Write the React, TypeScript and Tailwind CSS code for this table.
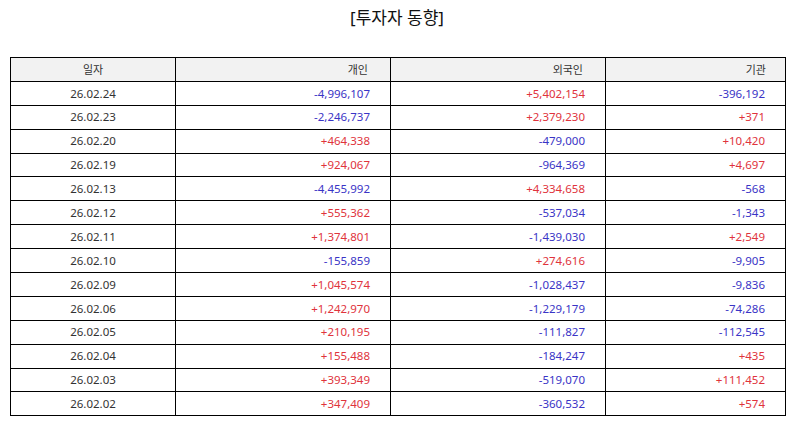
import React from "react";

const rows: [string, string, string, string][] = [
  ["26.02.24", "-4,996,107", "+5,402,154", "-396,192"],
  ["26.02.23", "-2,246,737", "+2,379,230", "+371"],
  ["26.02.20", "+464,338", "-479,000", "+10,420"],
  ["26.02.19", "+924,067", "-964,369", "+4,697"],
  ["26.02.13", "-4,455,992", "+4,334,658", "-568"],
  ["26.02.12", "+555,362", "-537,034", "-1,343"],
  ["26.02.11", "+1,374,801", "-1,439,030", "+2,549"],
  ["26.02.10", "-155,859", "+274,616", "-9,905"],
  ["26.02.09", "+1,045,574", "-1,028,437", "-9,836"],
  ["26.02.06", "+1,242,970", "-1,229,179", "-74,286"],
  ["26.02.05", "+210,195", "-111,827", "-112,545"],
  ["26.02.04", "+155,488", "-184,247", "+435"],
  ["26.02.03", "+393,349", "-519,070", "+111,452"],
  ["26.02.02", "+347,409", "-360,532", "+574"],
];

function Num({ v }: { v: string }) {
  const cls = v.startsWith("-") ? "text-[#3a34c6]" : "text-[#e0333c]";
  return (
    <td className={`border-[1.5px] border-black h-[23.9px] p-0 pr-[20px] text-right ${cls}`}>{v}</td>
  );
}

export default function App() {
  return (
    <div
      className="w-[794px] h-[425px] bg-white pt-[6px] px-[10px]"
      style={{ fontFamily: '"Noto Sans", "Noto Sans CJK KR", sans-serif' }}
    >
      <div className="text-center text-[17px] leading-[24px] text-[#111]">[투자자 동향]</div>
      <table className="mt-[27px] w-[775px] border-collapse table-fixed text-[11.5px] leading-none text-[#333]">
        <colgroup>
          <col className="w-[165px]" />
          <col className="w-[215px]" />
          <col className="w-[215px]" />
          <col className="w-[180px]" />
        </colgroup>
        <thead>
          <tr className="bg-[#f2f2f2]">
            <th className="border-[1.5px] border-black h-[23.9px] p-0 font-normal text-center text-[11px]">일자</th>
            <th className="border-[1.5px] border-black h-[23.9px] p-0 pr-[22px] font-normal text-right text-[11px]">개인</th>
            <th className="border-[1.5px] border-black h-[23.9px] p-0 pr-[22px] font-normal text-right text-[11px]">외국인</th>
            <th className="border-[1.5px] border-black h-[23.9px] p-0 pr-[19px] font-normal text-right text-[11px]">기관</th>
          </tr>
        </thead>
        <tbody>
          {rows.map((r) => (
            <tr key={r[0]}>
              <td className="border-[1.5px] border-black h-[23.9px] p-0 text-center">{r[0]}</td>
              <Num v={r[1]} />
              <Num v={r[2]} />
              <Num v={r[3]} />
            </tr>
          ))}
        </tbody>
      </table>
    </div>
  );
}
